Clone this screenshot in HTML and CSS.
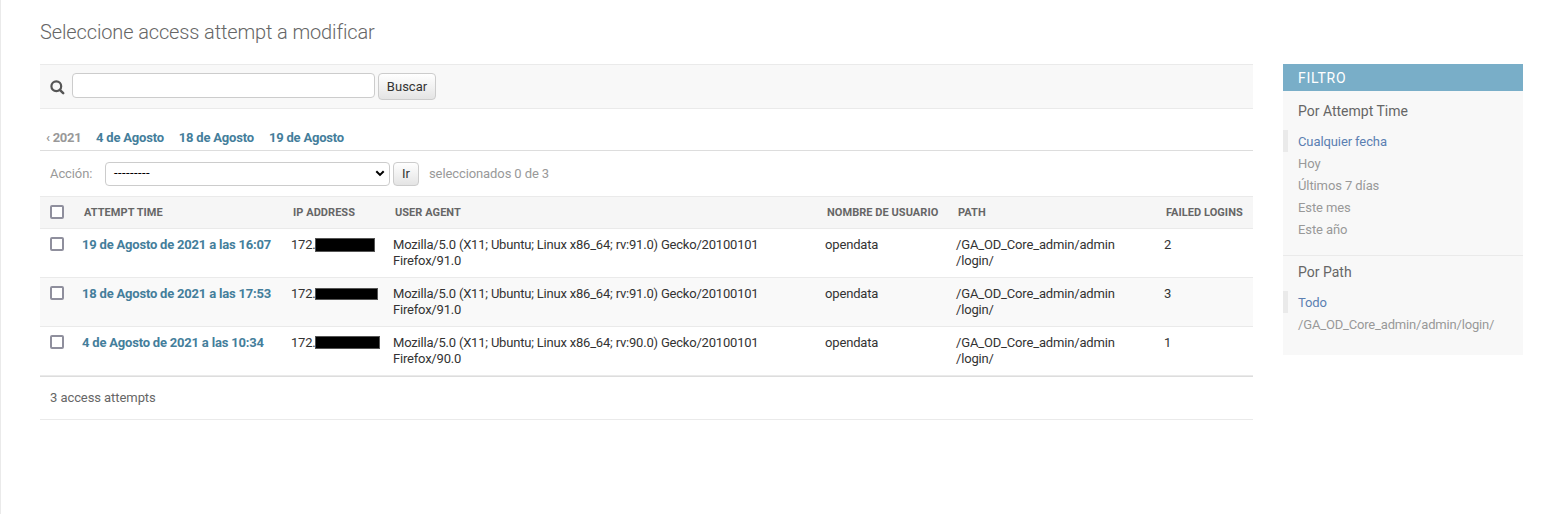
FILE: index.html
```html
<!DOCTYPE html>
<html lang="es">
<head>
<meta charset="utf-8">
<title>Seleccione access attempt a modificar</title>
<link rel="stylesheet" href="styles.css">
</head>
<body>
<div class="page">
<h1>Seleccione access attempt a modificar</h1>
<div class="content">
<main class="changelist">
<form class="toolbar">
<svg class="search-icon" width="15" height="15" viewBox="0 0 15 15"><circle cx="6.3" cy="6.2" r="4.9" fill="none" stroke="#555" stroke-width="2.2"/><path d="M9.8 9.8L13.2 13.1" stroke="#555" stroke-width="2.5" stroke-linecap="round"/></svg>
<input class="search" type="text">
<button class="btn btn-search" type="button">Buscar</button>
</form>
<nav class="dates"><a class="back">‹ 2021</a><a>4 de Agosto</a><a>18 de Agosto</a><a>19 de Agosto</a></nav>
<div class="actions">
<span class="action-label">Acción:</span>
<div class="select"><span>---------</span><svg width="10" height="7" viewBox="0 0 10 7"><path d="M1.3 1.2L5 4.9L8.7 1.2" fill="none" stroke="#000" stroke-width="2"/></svg></div>
<button class="btn btn-go" type="button">Ir</button>
<span class="count">seleccionados 0 de 3</span>
</div>
<table>
<colgroup><col class="c-check"><col class="c-time"><col class="c-ip"><col class="c-agent"><col class="c-user"><col class="c-path"><col class="c-fail"></colgroup>
<thead><tr><th><span class="check"></span></th><th>Attempt time</th><th>IP Address</th><th>User Agent</th><th>Nombre de usuario</th><th>Path</th><th>Failed Logins</th></tr></thead>
<tbody>
<tr><td><span class="check"></span></td><td class="time">19 de Agosto de 2021 a las 16:07</td><td><span class="ip"><span class="ip-text">172.</span><i class="mask mask-a"></i></span></td><td>Mozilla/5.0 (X11; Ubuntu; Linux x86_64; rv:91.0) Gecko/20100101<br>Firefox/91.0</td><td>opendata</td><td>/GA_OD_Core_admin/admin<br>/login/</td><td>2</td></tr>
<tr><td><span class="check"></span></td><td class="time">18 de Agosto de 2021 a las 17:53</td><td><span class="ip"><span class="ip-text">172.</span><i class="mask mask-b"></i></span></td><td>Mozilla/5.0 (X11; Ubuntu; Linux x86_64; rv:91.0) Gecko/20100101<br>Firefox/91.0</td><td>opendata</td><td>/GA_OD_Core_admin/admin<br>/login/</td><td>3</td></tr>
<tr><td><span class="check"></span></td><td class="time">4 de Agosto de 2021 a las 10:34</td><td><span class="ip"><span class="ip-text">172.</span><i class="mask mask-c"></i></span></td><td>Mozilla/5.0 (X11; Ubuntu; Linux x86_64; rv:90.0) Gecko/20100101<br>Firefox/90.0</td><td>opendata</td><td>/GA_OD_Core_admin/admin<br>/login/</td><td>1</td></tr>
</tbody>
</table>
<p class="paginator">3 access attempts</p>
</main>
<aside class="filter">
<h2>Filtro</h2>
<h3>Por Attempt Time</h3>
<ul class="divided"><li class="selected">Cualquier fecha</li><li>Hoy</li><li>Últimos 7 días</li><li>Este mes</li><li>Este año</li></ul>
<h3>Por Path</h3>
<ul><li class="selected">Todo</li><li class="path">/GA_OD_Core_admin/admin/login/</li></ul>
</aside>
</div>
</div>
</body>
</html>
```
FILE: styles.css
```css
* { box-sizing: border-box; }
body { margin: 0; background: #fff; color: #333; font: 13px/16px Roboto, sans-serif; }
.page { height: 514px; padding: 20px 40px 0 39px; border-left: 1px solid #eaeaea; }
h1 { margin: 0 0 20px; font-size: 20px; line-height: 24px; font-weight: 300; letter-spacing: -.13px; font-variant-ligatures: common-ligatures; color: #666; }
.content { display: flex; gap: 30px; align-items: flex-start; }
.changelist { width: 1213px; }
.toolbar { display: flex; align-items: flex-start; height: 45px; padding: 8px 10px; background: #f8f8f8; border-top: 1px solid #eaeaea; border-bottom: 1px solid #eaeaea; }
.search-icon { margin: 7px 7px 0 0; }
.search { width: 303px; height: 25px; margin: 0 3px 0 0; padding: 2px 5px; border: 1px solid #ccc; border-radius: 4px; background: #fff; }
.btn { padding: 0; border: 1px solid #ccc; border-radius: 4px; background: linear-gradient(#fff, #e4e4e4); color: #333; font: 13px/16px Roboto, sans-serif; text-align: center; }
.btn-search { width: 58px; height: 27px; }
.dates { display: flex; gap: 15px; height: 42px; padding: 21px 6px 0; border-bottom: 1px solid #ddd; font-weight: 700; letter-spacing: -.2px; color: #447e9b; }
.dates .back { width: 35px; letter-spacing: -.3px; white-space: nowrap; color: #999; }
.actions { display: flex; align-items: center; height: 45px; padding: 0 10px; letter-spacing: -.1px; color: #999; }
.action-label { width: 55px; }
.select { display: flex; align-items: center; justify-content: space-between; width: 285px; height: 24px; margin-right: 3px; padding: 0 4px 0 8px; border: 1px solid #ccc; border-radius: 4px; letter-spacing: .4px; color: #000; }
.select span { margin-top: -1px; }
.btn-go { width: 26px; height: 24px; margin-right: 10px; }
table { width: 1213px; table-layout: fixed; border-collapse: separate; border-spacing: 0; border-bottom: 1px solid #ddd; }
.c-check { width: 32px; }
.c-time { width: 209px; }
.c-ip { width: 102px; }
.c-agent { width: 432px; }
.c-user { width: 131px; }
.c-path { width: 208px; }
.c-fail { width: 99px; }
th { height: 33px; padding: 0 0 0 12px; background: #f6f6f6; border-top: 1px solid #eaeaea; border-bottom: 1px solid #eaeaea; color: #666; font-size: 11px; font-weight: 700; letter-spacing: .05px; text-align: left; text-transform: uppercase; white-space: nowrap; }
th:first-child { padding: 0 0 1px 10px; }
td { height: 49px; padding: 8px 0 8px 10px; border-bottom: 1px solid #eaeaea; letter-spacing: -.2px; vertical-align: top; white-space: nowrap; }
td:nth-child(n+5) { letter-spacing: -.16px; }
tbody tr:nth-child(2) { background: #f9f9f9; }
.check { display: block; width: 14px; height: 14px; border: 2px solid #8f8f9d; border-radius: 2px; background: #fff; }
.time { color: #447e9b; font-weight: 700; }
.ip { display: flex; }
.ip-text { width: 24px; }
.mask { background: #000; outline: 1px solid #555; outline-offset: -1px; }
.mask-a { width: 60px; height: 14px; margin-top: 1px; }
.mask-b { width: 63px; height: 12px; margin-top: 2px; }
.mask-c { width: 65px; height: 13px; margin-top: 1px; }
.paginator { height: 43px; margin: 0; padding: 13px 10px; border-bottom: 1px solid #eaeaea; letter-spacing: -.07px; color: #666; }
.filter { width: 240px; height: 291px; background: #f8f8f8; }
.filter h2 { height: 27px; margin: 0 0 12px; padding: 5px 15px; background: #79aec8; color: #fff; font-size: 14px; line-height: 18px; font-weight: 400; letter-spacing: .75px; text-transform: uppercase; }
.filter h3 { margin: 0 0 11px; padding: 0 15px; color: #666; font-size: 14px; line-height: 16px; font-weight: 400; }
.filter ul { margin: 0; padding: 0; list-style: none; letter-spacing: -.1px; color: #999; }
.filter .divided { height: 126px; margin-bottom: 8px; border-bottom: 1px solid #eaeaea; }
.filter li { height: 22px; padding: 4px 15px 2px; }
.filter .path { letter-spacing: -.17px; }
.filter .selected { padding-left: 10px; border-left: 5px solid #eaeaea; color: #5b80b2; }
```
